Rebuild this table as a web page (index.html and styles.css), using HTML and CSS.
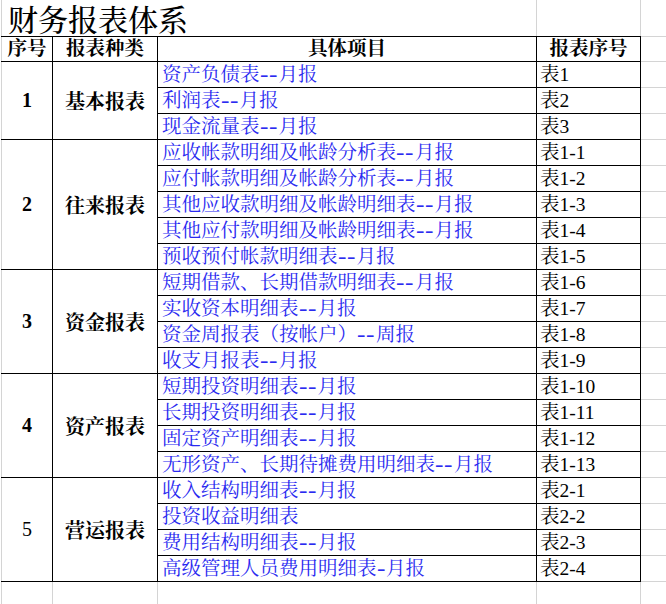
FILE: index.html
```html
<!DOCTYPE html>
<html lang="zh-CN">
<head>
<meta charset="utf-8">
<title>财务报表体系</title>
<link rel="stylesheet" href="styles.css">
</head>
<body>
<table class="sheet">
  <colgroup>
    <col class="w1"><col class="w2"><col class="w3"><col class="w4"><col class="w5">
  </colgroup>
  <tr class="r-title">
    <td class="title" colspan="3">财务报表体系</td>
    <td class="tgrid"></td>
    <td class="xgrid"></td>
  </tr>
  <tr class="r-head">
    <th class="b first">序号</th>
    <th class="b">报表种类</th>
    <th class="b">具体项目</th>
    <th class="b">报表序号</th>
    <td class="xgrid"></td>
  </tr>

  <tr class="r">
    <td class="b first num bold" rowspan="3">1</td>
    <td class="b cat" rowspan="3">基本报表</td>
    <td class="b item">资产负债表<span class="dash">--</span>月报</td>
    <td class="b code">表1</td>
    <td class="xgrid"></td>
  </tr>
  <tr class="r"><td class="b item">利润表<span class="dash">--</span>月报</td><td class="b code">表2</td><td class="xgrid"></td></tr>
  <tr class="r"><td class="b item">现金流量表<span class="dash">--</span>月报</td><td class="b code">表3</td><td class="xgrid"></td></tr>

  <tr class="r">
    <td class="b first num bold" rowspan="5">2</td>
    <td class="b cat" rowspan="5">往来报表</td>
    <td class="b item">应收帐款明细及帐龄分析表<span class="dash">--</span>月报</td>
    <td class="b code">表1-1</td>
    <td class="xgrid"></td>
  </tr>
  <tr class="r"><td class="b item">应付帐款明细及帐龄分析表<span class="dash">--</span>月报</td><td class="b code">表1-2</td><td class="xgrid"></td></tr>
  <tr class="r"><td class="b item">其他应收款明细及帐龄明细表<span class="dash">--</span>月报</td><td class="b code">表1-3</td><td class="xgrid"></td></tr>
  <tr class="r"><td class="b item">其他应付款明细及帐龄明细表<span class="dash">--</span>月报</td><td class="b code">表1-4</td><td class="xgrid"></td></tr>
  <tr class="r"><td class="b item">预收预付帐款明细表<span class="dash">--</span>月报</td><td class="b code">表1-5</td><td class="xgrid"></td></tr>

  <tr class="r">
    <td class="b first num bold" rowspan="4">3</td>
    <td class="b cat" rowspan="4">资金报表</td>
    <td class="b item">短期借款、长期借款明细表<span class="dash">--</span>月报</td>
    <td class="b code">表1-6</td>
    <td class="xgrid"></td>
  </tr>
  <tr class="r"><td class="b item">实收资本明细表<span class="dash">--</span>月报</td><td class="b code">表1-7</td><td class="xgrid"></td></tr>
  <tr class="r"><td class="b item">资金周报表（按帐户）<span class="dash">--</span>周报</td><td class="b code">表1-8</td><td class="xgrid"></td></tr>
  <tr class="r"><td class="b item">收支月报表<span class="dash">--</span>月报</td><td class="b code">表1-9</td><td class="xgrid"></td></tr>

  <tr class="r">
    <td class="b first num bold" rowspan="4">4</td>
    <td class="b cat" rowspan="4">资产报表</td>
    <td class="b item">短期投资明细表<span class="dash">--</span>月报</td>
    <td class="b code">表1-10</td>
    <td class="xgrid"></td>
  </tr>
  <tr class="r"><td class="b item">长期投资明细表<span class="dash">--</span>月报</td><td class="b code">表1-11</td><td class="xgrid"></td></tr>
  <tr class="r"><td class="b item">固定资产明细表<span class="dash">--</span>月报</td><td class="b code">表1-12</td><td class="xgrid"></td></tr>
  <tr class="r"><td class="b item">无形资产、长期待摊费用明细表<span class="dash">--</span>月报</td><td class="b code">表1-13</td><td class="xgrid"></td></tr>

  <tr class="r">
    <td class="b first num" rowspan="4">5</td>
    <td class="b cat" rowspan="4">营运报表</td>
    <td class="b item">收入结构明细表<span class="dash">--</span>月报</td>
    <td class="b code">表2-1</td>
    <td class="xgrid"></td>
  </tr>
  <tr class="r"><td class="b item">投资收益明细表</td><td class="b code">表2-2</td><td class="xgrid"></td></tr>
  <tr class="r"><td class="b item">费用结构明细表<span class="dash">--</span>月报</td><td class="b code">表2-3</td><td class="xgrid"></td></tr>
  <tr class="r"><td class="b item">高级管理人员费用明细表<span class="dash one">-</span>月报</td><td class="b code">表2-4</td><td class="xgrid"></td></tr>

  <tr class="r">
    <td class="g first"></td><td class="g"></td><td class="g"></td><td class="g"></td><td class="xgrid"></td>
  </tr>
</table>
</body>
</html>
```
FILE: styles.css
```css
html, body {
  margin: 0;
  padding: 0;
  background: #ffffff;
  overflow: hidden;
}

.sheet {
  border-collapse: collapse;
  table-layout: fixed;
  width: 690px;
  margin-left: 1px;
  font-family: "Liberation Serif", "Noto Serif CJK SC", "Noto Sans CJK SC", serif;
  color: #000;
}

.w1 { width: 51px; }
.w2 { width: 105px; }
.w3 { width: 379px; }
.w4 { width: 104px; }
.w5 { width: 51px; }

td, th {
  padding: 0;
  white-space: nowrap;
  overflow: visible;
}

.r-title td { height: 33px; }
.r-head th, .r-head td { height: 24px; }
.r td { height: 25px; }

.title {
  font-family: "Noto Serif CJK SC", "Noto Sans CJK SC", serif;
  font-size: 30px;
  font-weight: 500;
  padding-left: 6px;
  line-height: 30px;
  vertical-align: bottom;
  padding-bottom: 3px;
  border-left: 1px solid #d4d4d4;
  border-right: 1px solid #d4d4d4;
  border-bottom: 1px solid #000;
}

.tgrid {
  border-right: 1px solid #d4d4d4;
  border-bottom: 1px solid #000;
}

.xgrid {
  border-bottom: 1px solid #d4d4d4;
}

.b {
  border: 1px solid #000;
}

.first {
  border-left: 1px solid #d4d4d4;
}

.g {
  border-right: 1px solid #d4d4d4;
}

th {
  font-size: 19.5px;
  font-weight: 700;
  text-align: center;
  line-height: 22px;
}

.num {
  text-align: center;
  font-size: 20px;
}

.bold { font-weight: 700; }

.cat {
  text-align: center;
  font-size: 20px;
  font-weight: 700;
}

.item {
  color: #2a2af0;
  font-size: 19.5px;
  line-height: 22px;
  padding-left: 4px;
  text-align: left;
}

.dash {
  display: inline-block;
  width: 19px;
  font-weight: 700;
  letter-spacing: 0.5px;
  transform: scaleX(1.3);
  transform-origin: left center;
}

.dash.one {
  width: 9.5px;
}

.code {
  font-size: 19.5px;
  line-height: 22px;
  padding-left: 3px;
  text-align: left;
}
```
